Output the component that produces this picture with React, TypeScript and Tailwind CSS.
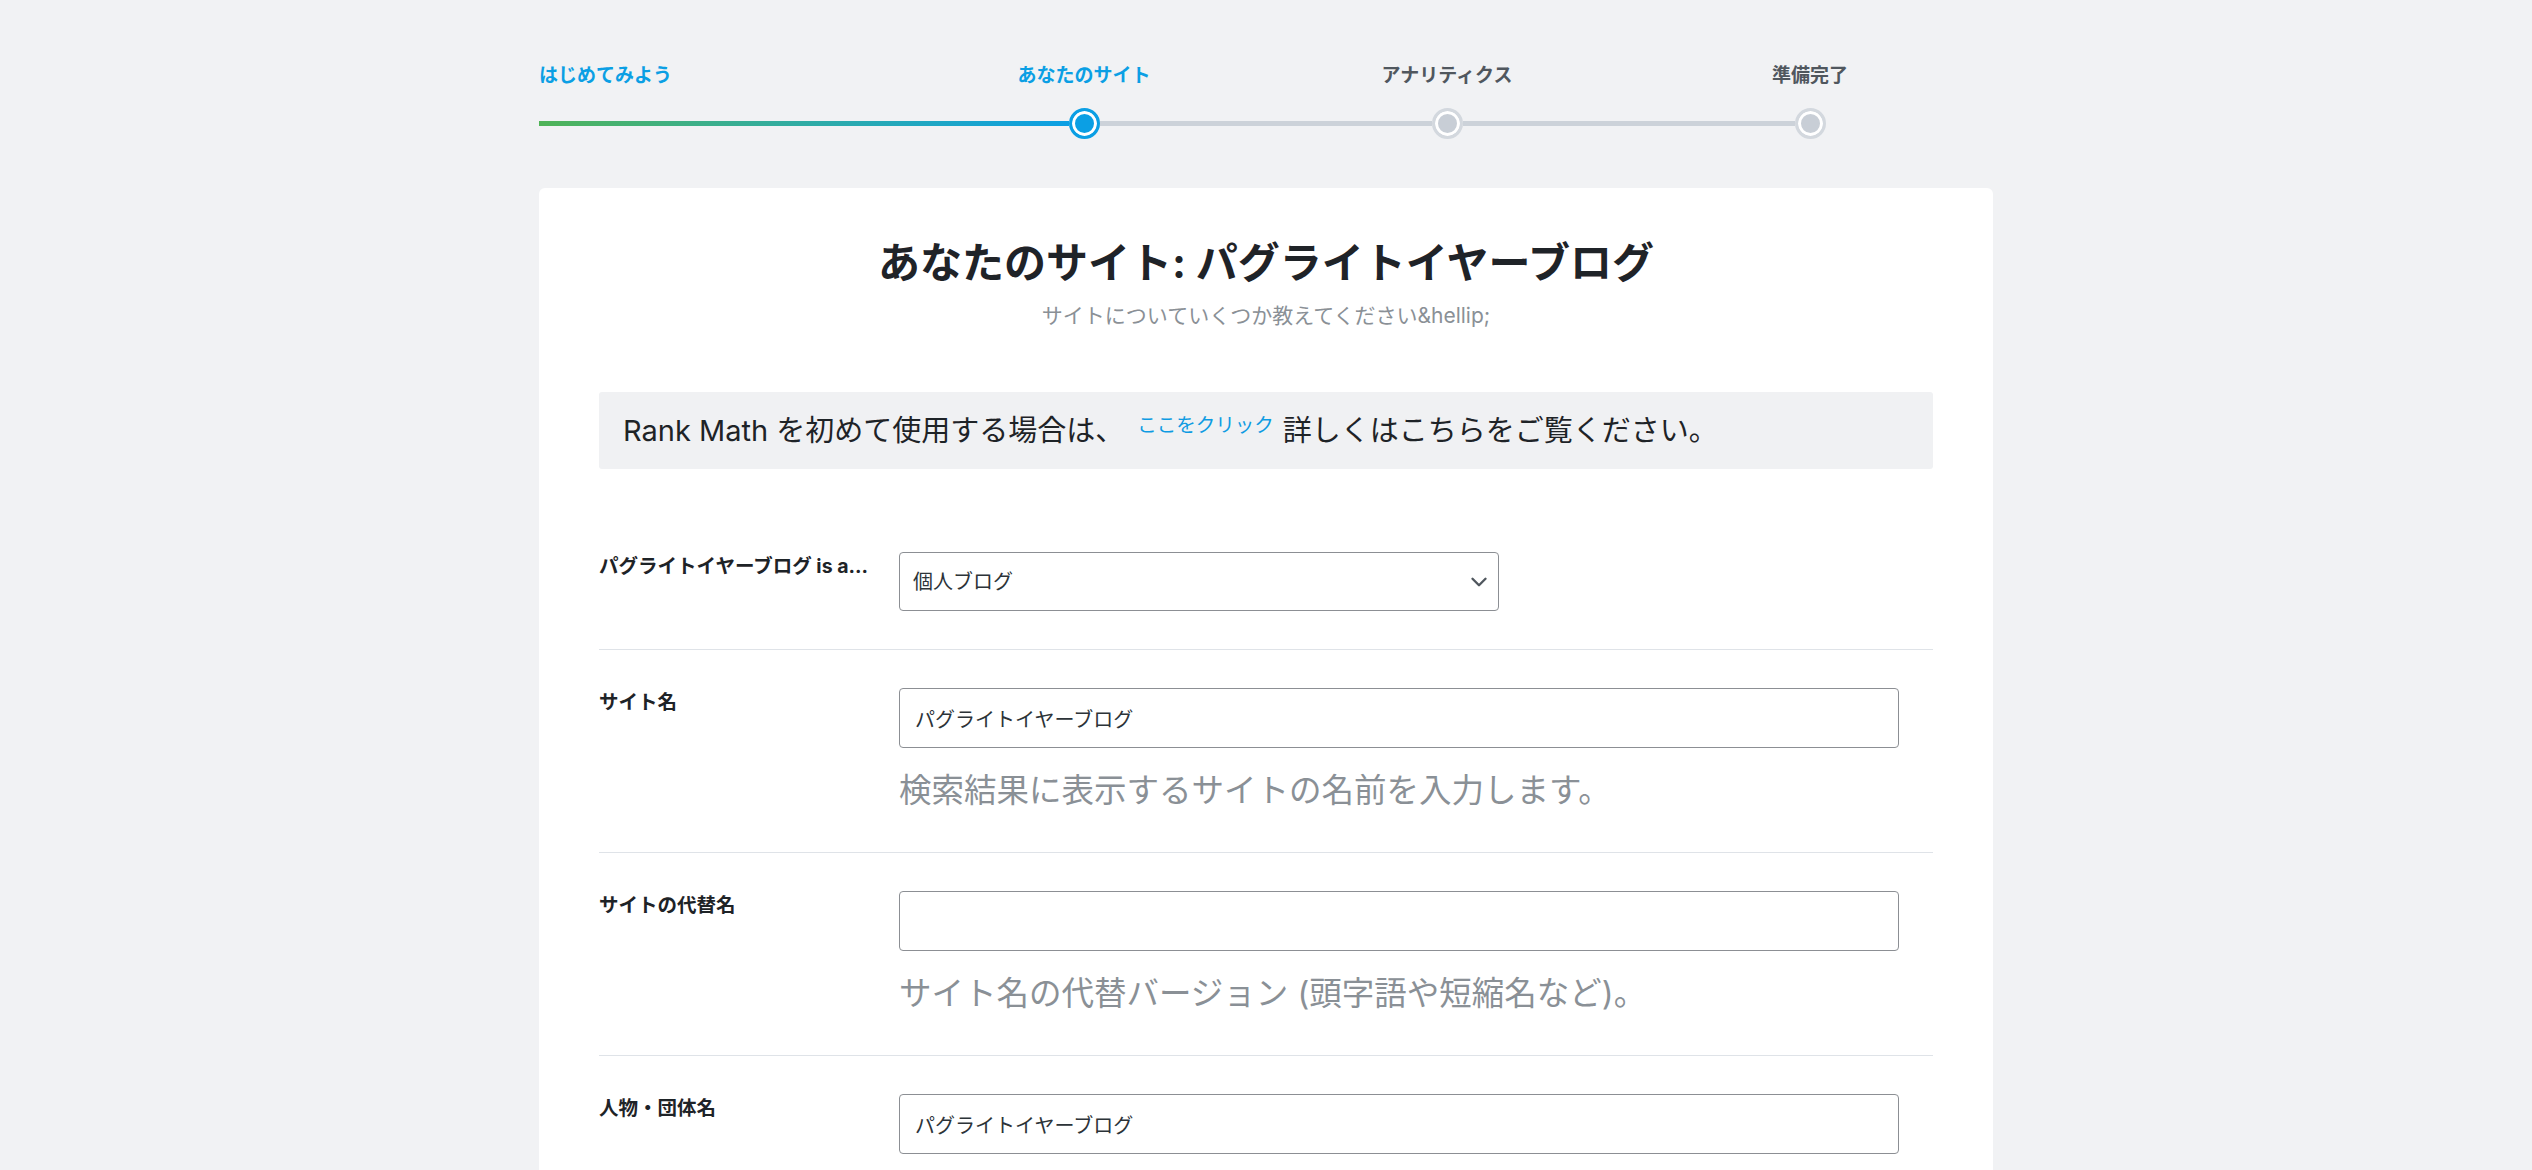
import { ChevronDown } from 'lucide-react';

const FONT = 'font-["Inter","Noto_Sans_CJK_JP",sans-serif]';

type Field = {
  label: string;
  value: string;
  help?: string;
};

const fields: Field[] = [
  { label: 'サイト名', value: 'パグライトイヤーブログ', help: '検索結果に表示するサイトの名前を入力します。' },
  { label: 'サイトの代替名', value: '', help: 'サイト名の代替バージョン (頭字語や短縮名など)。' },
  { label: '人物・団体名', value: 'パグライトイヤーブログ' },
];

// Step dot: ring + white gap + fill
const Dot = ({ active }: { active?: boolean }) => (
  <span
    className={`block w-[31px] h-[31px] shrink-0 rounded-full border-[3px] shadow-[inset_0_0_0_3px_#fff] ${
      active ? 'border-[#0b9fe4] bg-[#0b9fe4]' : 'border-[#d3d8de] bg-[#c8ced6]'
    }`}
  />
);

const Progress = () => (
  <div className="pt-[64px]">
    <div className="flex text-[19px] leading-[24px] font-semibold">
      <div className="w-[445px] text-[#0b9fe4]">はじめてみよう</div>
      <div className="w-[200px] text-center text-[#0b9fe4]">あなたのサイト</div>
      <div className="w-[200px] ml-[163px] text-center text-[#50575e]">アナリティクス</div>
      <div className="w-[200px] ml-[163px] text-center text-[#50575e]">準備完了</div>
    </div>
    <div className="mt-[20px] flex items-center">
      <span className="block w-[530px] h-[5px] bg-gradient-to-r from-[#4fb356] to-[#0b9fe4]" />
      <Dot active />
      <span className="block w-[332px] h-[5px] bg-[#ccd2d9]" />
      <Dot />
      <span className="block w-[332px] h-[5px] bg-[#ccd2d9]" />
      <Dot />
    </div>
  </div>
);

const Row = ({ label, children, last }: { label: string; children: React.ReactNode; last?: boolean }) => (
  <div className={`flex pt-[38px] pb-[38px] ${last ? '' : 'border-b border-[#dfe3e8]'}`}>
    <div className="w-[300px] shrink-0 text-[19.5px] leading-[28px] font-bold text-[#1e2327]">{label}</div>
    <div className="flex-1">{children}</div>
  </div>
);

export default function App() {
  return (
    <div className={`min-h-screen bg-[#f1f2f4] ${FONT}`}>
      <div className="mx-auto w-[1454px]">
        <Progress />

        <div className="mt-[49px] bg-white rounded-[6px] px-[60px] pt-[49px] pb-[60px]">
          <h1 className="text-center text-[42px] leading-[52px] font-bold text-[#1f2328]">
            あなたのサイト: パグライトイヤーブログ
          </h1>
          <p className="mt-[13px] text-center text-[21px] leading-[28px] text-[#8a9096]">
            サイトについていくつか教えてください&amp;hellip;
          </p>

          <div className="mt-[62px] mb-[45px] h-[77px] flex items-center px-[24px] bg-[#f0f1f3] rounded-[3px]">
            <p className="text-[29px] leading-[36px] text-[#1e2327]">
              Rank Math を初めて使用する場合は、
              <a className="align-top text-[19.5px] leading-[24px] text-[#0e9be2] ml-[13px] mr-[9px]">ここをクリック</a>
              詳しくはこちらをご覧ください。
            </p>
          </div>

          <Row label="パグライトイヤーブログ is a...">
            <div className="w-[600px] h-[59px] flex items-center justify-between pl-[13px] pr-[6px] border border-[#8c8f94] rounded-[4px] text-[20px] text-[#2c3338]">
              <span>個人ブログ</span>
              <ChevronDown size={26} strokeWidth={2.2} className="text-[#50575e]" />
            </div>
          </Row>

          {fields.map((f, i) => (
            <Row key={f.label} label={f.label} last={i === fields.length - 1}>
              <input
                readOnly
                defaultValue={f.value}
                className="block w-[1000px] h-[60px] px-[15px] border border-[#8c8f94] rounded-[4px] text-[20px] text-[#2c3338] outline-none"
              />
              {f.help && (
                <p className="mt-[19px] text-[32.5px] leading-[47px] text-[#8a9096]">{f.help}</p>
              )}
            </Row>
          ))}
        </div>
      </div>
    </div>
  );
}
